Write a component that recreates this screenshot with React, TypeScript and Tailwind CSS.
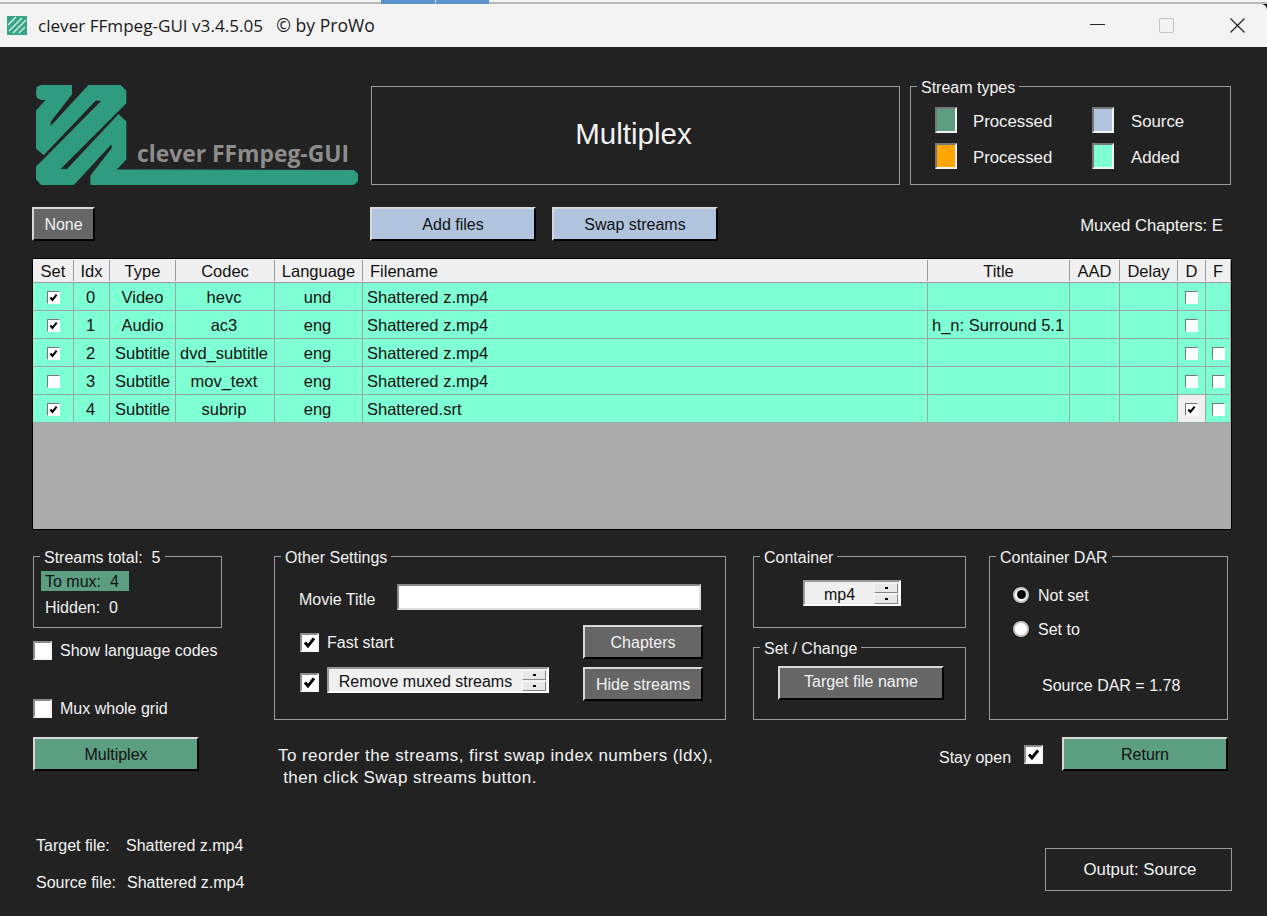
import React from "react";

const FONT = "font-['Liberation_Sans',Arial,sans-serif]";

function Tick({ className = "" }: { className?: string }) {
  return (
    <svg viewBox="0 0 10 10" className={className}>
      <path d="M1.5 5 L3.8 7.6 L8.5 1.8" fill="none" stroke="#000" strokeWidth="2.3" />
    </svg>
  );
}

function SmallBox({ checked }: { checked?: boolean }) {
  return (
    <span className="flex h-[13px] w-[13px] items-center justify-center border border-[#fff] border-t-[#777] border-l-[#777] bg-white">
      {checked && <Tick className="h-[9px] w-[9px]" />}
    </span>
  );
}

function BigBox({ checked, className = "" }: { checked?: boolean; className?: string }) {
  return (
    <span
      className={`flex h-[19px] w-[19px] shrink-0 items-center justify-center border-2 border-[#f4f4f4] border-t-[#8a8a8a] border-l-[#8a8a8a] bg-white ${className}`}
    >
      {checked && <Tick className="h-[13px] w-[13px]" />}
    </span>
  );
}

function Btn({ className, label }: { className: string; label: string }) {
  return (
    <button
      className={`flex h-[34px] shrink-0 items-center justify-center border-2 border-t-[#d8d8d8] border-l-[#d8d8d8] border-r-black border-b-black pt-[2px] text-[16px] ${className}`}
    >
      {label}
    </button>
  );
}

function Box({
  legend,
  className,
  children,
}: {
  legend: string;
  className: string;
  children?: React.ReactNode;
}) {
  return (
    <fieldset className={`shrink-0 border border-[#9a9a9a] ${className}`}>
      <legend className="ml-[6px] box-border h-[20px] whitespace-pre px-[4px] pt-[4px] text-[16px] leading-[16px] text-[#f2f2f2]">
        {legend}
      </legend>
      {children}
    </fieldset>
  );
}

function Swatch({ color }: { color: string }) {
  return (
    <span
      className="h-[26px] w-[22px] shrink-0 border-2 border-[#f2f2f2] border-t-[#777] border-l-[#777]"
      style={{ backgroundColor: color }}
    />
  );
}

function Spin({ className, label }: { className: string; label: string }) {
  return (
    <div
      className={`flex h-[26px] items-center border-2 border-white border-t-[#999] border-l-[#999] bg-[#f0f0f0] text-[16px] leading-[19px] text-[#111] ${className}`}
    >
      <span className="flex-1 pt-[2px] text-center">{label}</span>
      <span className="mr-[1px] flex w-[24px] flex-col gap-[1px]">
        <span className="flex h-[10px] items-center justify-center border border-[#f8f8f8] border-r-[#888] border-b-[#888] bg-[#e8e8e8]">
          <span className="h-[2px] w-[3px] bg-black" />
        </span>
        <span className="flex h-[10px] items-center justify-center border border-[#f8f8f8] border-r-[#888] border-b-[#888] bg-[#e8e8e8]">
          <span className="h-[2px] w-[3px] bg-black" />
        </span>
      </span>
    </div>
  );
}

const HEAD = ["Set", "Idx", "Type", "Codec", "Language", "Filename", "Title", "AAD", "Delay", "D", "F"];

const ROWS = [
  { set: true, idx: "0", type: "Video", codec: "hevc", lang: "und", file: "Shattered z.mp4", title: "", d: false, hasF: false },
  { set: true, idx: "1", type: "Audio", codec: "ac3", lang: "eng", file: "Shattered z.mp4", title: "h_n: Surround 5.1", d: false, hasF: false },
  { set: true, idx: "2", type: "Subtitle", codec: "dvd_subtitle", lang: "eng", file: "Shattered z.mp4", title: "", d: false, hasF: true },
  { set: false, idx: "3", type: "Subtitle", codec: "mov_text", lang: "eng", file: "Shattered z.mp4", title: "", d: false, hasF: true },
  { set: true, idx: "4", type: "Subtitle", codec: "subrip", lang: "eng", file: "Shattered.srt", title: "", d: true, hasF: true },
];

const COLS = "grid grid-cols-[41px_36px_66px_99px_88px_565px_142px_50px_58px_28px_25px]";
const CELL = "flex items-center justify-center border-r border-b border-[#98a8a2] pt-[2px]";

const LOGO_POINTS =
  "28,17 118,17 118,42 54,125 54,143 170,17 265,17 281,33 281,69 82,268 105,270 260,105 281,125 281,238 250,270 " +
  "965,272 976,282 976,303 965,313 177,313 177,288 241,205 241,187 125,313 28,313 14,297 14,261 213,60 190,60 " +
  "35,223 14,205 14,92 45,58 28,58 16,52 14,37 16,22";

function Logo() {
  return (
    <svg width="332" height="104" viewBox="30 83 332 104" className="shrink-0">
      <g transform="translate(32 80) scale(0.3333)">
        <polygon points={LOGO_POINTS} fill="#309c7f" stroke="#309c7f" strokeWidth="4" strokeLinejoin="round" />
      </g>
      <text
        x="137"
        y="162"
        fill="#8c8c8c"
        fontFamily="'Open Sans', sans-serif"
        fontWeight="700"
        fontSize="24"
        textLength="212"
        lengthAdjust="spacingAndGlyphs"
      >
        clever FFmpeg-GUI
      </text>
    </svg>
  );
}

export default function App() {
  return (
    <div className={`flex h-[916px] w-[1267px] flex-col overflow-hidden bg-[#222222] text-[#f2f2f2] ${FONT}`}>
      {/* desktop sliver */}
      <div className="flex h-[4px] shrink-0 border-b-2 border-[#b9b9b9] bg-[#f2f2f2]">
        <div className="ml-[381px] h-[4px] w-[54px] bg-[#5b93cc]" />
        <div className="ml-[1px] h-[4px] w-[53px] bg-[#5b93cc]" />
      </div>

      {/* title bar */}
      <div className="flex h-[43px] shrink-0 items-center rounded-tr-[6px] bg-[#f3f3f3] pl-[7px] pr-[22px] text-[#1a1a1a]">
        <svg width="20" height="19" viewBox="0 0 20 19" className="shrink-0">
          <rect width="20" height="19" fill="#35a585" />
          <path d="M1 9 L9 1 M2 15 L15 2 M6 17 L19 4 M12 17 L18 11" stroke="#dff3ec" strokeWidth="1.3" fill="none" />
        </svg>
        <span className="ml-[11px] whitespace-pre font-['Open_Sans',sans-serif] text-[17.1px]">
          clever FFmpeg-GUI v3.4.5.05{"   "}
          <span className="text-[17.6px]">© by ProWo</span>
        </span>
        <div className="ml-auto flex items-center">
          <span className="mb-[2px] h-[1px] w-[15px] bg-[#222]" />
          <span className="ml-[54px] h-[15px] w-[15px] rounded-[2px] border border-[#c4c4c4]" />
          <svg width="15" height="15" viewBox="0 0 15 15" className="ml-[56px]">
            <path d="M0.5 0.5 L14.5 14.5 M14.5 0.5 L0.5 14.5" stroke="#222" strokeWidth="1.2" />
          </svg>
        </div>
      </div>

      {/* header row */}
      <div className="mt-[36px] flex h-[104px] items-start pl-[30px]">
        <Logo />
        <div className="ml-[9px] mt-[3px] flex h-[99px] w-[529px] items-center justify-center border border-[#9a9a9a] pb-[2px] pr-[4px] text-[29.5px]">
          Multiplex
        </div>
        <Box legend="Stream types" className="ml-[10px] mt-[-7px] h-[109px] w-[321px]">
          <div className="ml-[24px] mt-[11px] grid grid-cols-[157px_1fr] gap-y-[10px] text-[16.8px] leading-[20px]">
            {[
              ["#5c9e82", "Processed"],
              ["#b0c4de", "Source"],
              ["#ffa500", "Processed"],
              ["#7fffd4", "Added"],
            ].map(([c, t], i) => (
              <div key={i} className="flex h-[26px] items-center">
                <Swatch color={c} />
                <span className={`pt-[4px] ${i % 2 ? "ml-[17px]" : "ml-[16px]"}`}>{t}</span>
              </div>
            ))}
          </div>
        </Box>
      </div>

      {/* button row */}
      <div className="mt-[20px] flex h-[34px] items-center pl-[32px] pr-[44px]">
        <Btn label="None" className="w-[63px] bg-[#666666] text-[#f2f2f2]" />
        <Btn label="Add files" className="ml-[275px] w-[166px] bg-[#b0c4de] text-[#111]" />
        <Btn label="Swap streams" className="ml-[16px] w-[166px] bg-[#b0c4de] text-[#111]" />
        <span className="ml-auto pt-[3px] text-[16.7px]">Muxed Chapters: E</span>
      </div>

      {/* table */}
      <div className="ml-[32px] mt-[17px] h-[272px] w-[1200px] border border-black bg-[#ababab] text-[16.5px] text-[#111]">
        <div className={`${COLS} h-[24px] bg-[#f0f0f0]`}>
          {HEAD.map((h, i) => (
            <div key={h} className="flex items-center justify-center border-b border-[#9a9a9a]">
              <span
                className={`flex h-[21px] w-full items-center border-r border-[#9a9a9a] pt-[2px] ${
                  i === 5 ? "justify-start pl-[7px]" : "justify-center"
                }`}
              >
                {h}
              </span>
            </div>
          ))}
        </div>
        {ROWS.map((r) => (
          <div key={r.idx} className={`${COLS} h-[28px] bg-[#7fffd4]`}>
            <div className={`${CELL} pl-[1px]`}>
              <SmallBox checked={r.set} />
            </div>
            <div className={`${CELL} pr-[2px]`}>{r.idx}</div>
            <div className={CELL}>{r.type}</div>
            <div className={`${CELL} pr-[2px]`}>{r.codec}</div>
            <div className={`${CELL} pr-[2px]`}>{r.lang}</div>
            <div className={`${CELL} !justify-start pl-[4px]`}>{r.file}</div>
            <div className={`${CELL} !justify-start pl-[4px]`}>{r.title}</div>
            <div className={CELL} />
            <div className={CELL} />
            <div className={`${CELL} ${r.d ? "bg-[#f0f0f0]" : ""}`}>
              <SmallBox checked={r.d} />
            </div>
            <div className={CELL}>{r.hasF && <SmallBox />}</div>
          </div>
        ))}
      </div>

      {/* settings area */}
      <div className="mt-[16px] flex h-[226px] shrink-0 pl-[33px]">
        {/* left column */}
        <div className="flex w-[189px] shrink-0 flex-col">
          <Box legend="Streams total:  5" className="h-[82px] w-[189px]">
            <div className="ml-[7px] mt-[5px] flex h-[20px] w-[88px] items-center whitespace-pre bg-[#5c9e82] pl-[4px] pt-[2px] text-[16px] text-[#111]">
              To mux:  4
            </div>
            <div className="ml-[11px] mt-[5px] whitespace-pre text-[16px]">Hidden:  0</div>
          </Box>
          <label className="mt-[13px] flex items-center gap-[8px] whitespace-nowrap text-[16px] leading-[19px]">
            <BigBox />
            Show language codes
          </label>
          <label className="mt-[39px] flex items-center gap-[8px] whitespace-nowrap text-[16px] leading-[19px]">
            <BigBox />
            Mux whole grid
          </label>
          <Btn label="Multiplex" className="mt-[19px] w-[166px] bg-[#5c9e82] text-[#111]" />
        </div>

        {/* other settings + note */}
        <div className="ml-[52px] flex w-[452px] shrink-0 flex-col">
          <Box legend="Other Settings" className="h-[174px] w-[452px]">
            <div className="ml-[24px] mt-[18px] flex h-[26px] items-start text-[16px] leading-[19px]">
              <span className="w-[98px] pt-[6px]">Movie Title</span>
              <span className="h-[26px] w-[304px] border-2 border-[#e0e0e0] border-t-[#888] border-l-[#888] bg-white" />
            </div>
            <div className="ml-[25px] mt-[15px] grid grid-cols-[283px_120px] gap-y-[8px] text-[16px]">
              <div className="flex h-[34px] items-center gap-[8px]">
                <BigBox checked />
                <span className="pt-[2px]">Fast start</span>
              </div>
              <Btn label="Chapters" className="w-[120px] bg-[#666666] text-[#f2f2f2]" />
              <div className="flex h-[34px] items-start gap-[8px]">
                <BigBox checked className="mt-[6px]" />
                <Spin label="Remove muxed streams" className="w-[222px]" />
              </div>
              <Btn label="Hide streams" className="w-[120px] bg-[#666666] text-[#f2f2f2]" />
            </div>
          </Box>
          <p className="ml-[4px] mt-[25px] whitespace-pre text-[17px] leading-[22px] tracking-[0.44px]">
            {"To reorder the streams, first swap index numbers (ldx),\n then click Swap streams button."}
          </p>
        </div>

        {/* container column */}
        <div className="ml-[27px] flex w-[213px] shrink-0 flex-col">
          <Box legend="Container" className="h-[82px] w-[213px]">
            <div className="ml-[49px] mt-[14px]">
              <Spin label="mp4" className="w-[98px]" />
            </div>
          </Box>
          <Box legend="Set / Change" className="mt-[9px] h-[83px] w-[213px]">
            <div className="ml-[24px] mt-[9px]">
              <Btn label="Target file name" className="w-[166px] !pt-0 pb-[2px] bg-[#666666] text-[#f2f2f2]" />
            </div>
          </Box>
        </div>

        {/* DAR column */}
        <div className="ml-[23px] flex w-[239px] shrink-0 flex-col">
          <Box legend="Container DAR" className="h-[174px] w-[239px] text-[16px]">
            <div className="ml-[23px] mt-[19px] flex h-[19px] items-center gap-[9px]">
              <span className="flex h-[16px] w-[16px] items-center justify-center rounded-full border-2 border-[#c8c8c8] bg-white">
                <span className="h-[9px] w-[9px] rounded-full bg-black" />
              </span>
              <span className="pt-[2px]">Not set</span>
            </div>
            <div className="ml-[23px] mt-[15px] flex h-[19px] items-center gap-[9px]">
              <span className="h-[16px] w-[16px] rounded-full border-2 border-[#c8c8c8] bg-white" />
              <span className="pt-[2px]">Set to</span>
            </div>
            <div className="ml-[52px] mt-[36px]">Source DAR = 1.78</div>
          </Box>
          <div className="ml-[-50px] mt-[17px] flex h-[34px] items-center text-[16px]">
            <span className="w-[72px] whitespace-nowrap pt-[8px]">Stay open</span>
            <BigBox checked className="ml-[13px]" />
            <Btn label="Return" className="ml-[19px] w-[166px] bg-[#5c9e82] text-[#111]" />
          </div>
        </div>
      </div>

      {/* footer */}
      <div className="mt-[64px] flex items-start pl-[36px] pr-[35px] text-[16px]">
        <div className="flex flex-col gap-[18px] leading-[19px]">
          <div className="flex">
            <span className="w-[90px]">Target file:</span>
            <span>Shattered z.mp4</span>
          </div>
          <div className="flex">
            <span className="w-[91px]">Source file:</span>
            <span>Shattered z.mp4</span>
          </div>
        </div>
        <div className="ml-auto mt-[12px] flex h-[43px] w-[187px] items-center justify-center border border-[#9a9a9a] pl-[3px] text-[16.8px]">
          Output: Source
        </div>
      </div>
    </div>
  );
}
